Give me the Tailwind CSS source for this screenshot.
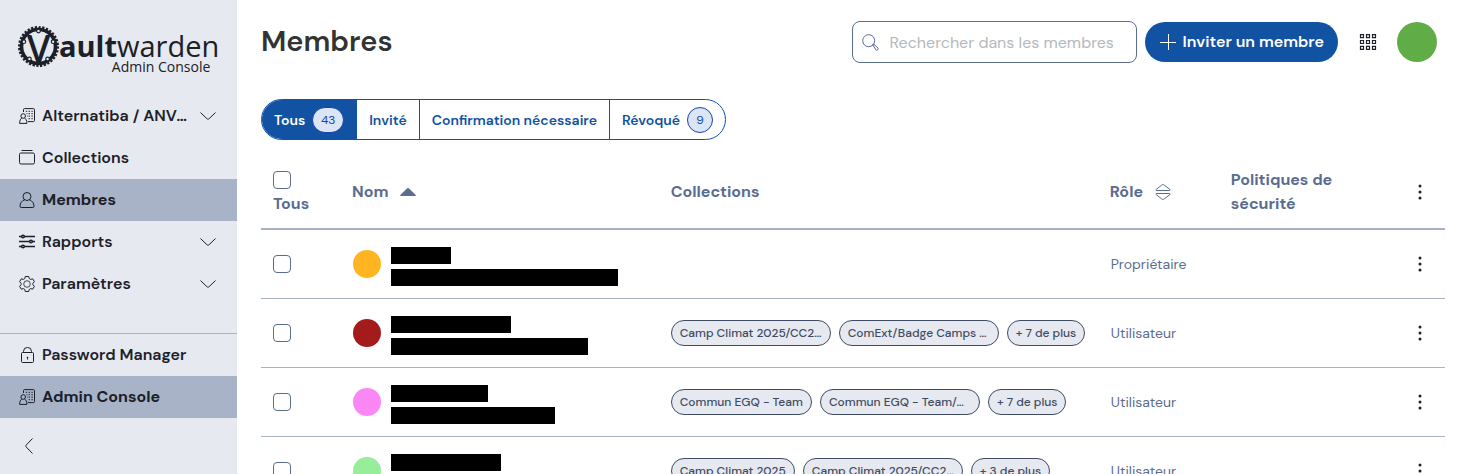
<!DOCTYPE html>
<html lang="fr">
<head>
  <meta charset="UTF-8" />
  <meta name="viewport" content="width=device-width, initial-scale=1.0" />
  <title>Membres | Vaultwarden</title>
  <script src="https://cdn.jsdelivr.net/npm/@tailwindcss/browser@4"></script>
</head>
<body class="bg-white text-[#1b2029] font-['DM_Sans',Inter,sans-serif]">

  <!-- Shared icons -->
  <svg class="hidden">
    <symbol id="i-business" viewBox="0 0 16 16">
      <path d="M4.500 4V1.600c0-.6.4-1 1-1h9c.6 0 1 .4 1 1v11c0 .6-.4 1-1 1H8.800" />
      <path d="M6.800 3.300h1.400M9.600 3.300H11M12.400 3.300h1.400M7.500 5.700h.9M9.600 5.700H11M12.400 5.700h1.400M8 8.100h.6M9.600 8.100H11M12.400 8.100h1.400M9.600 10.700H11M12.400 10.700h1.400" />
      <circle cx="4.200" cy="8" r="2.300" />
      <path d="M2.900 10C1.500 10.700.6 12.500.6 15.400h7.300C7.900 12.500 7 10.700 5.500 10" />
    </symbol>
    <symbol id="i-chevron" viewBox="0 0 16 16"><path d="M.5 4.500 6.900 10.700c.6.6 1.600.6 2.200 0L15.500 4.500" /></symbol>
  </svg>

  <div class="flex h-screen overflow-hidden">
    <!-- Sidebar -->
    <nav class="flex w-[237px] shrink-0 flex-col bg-[#e6e9ef] text-base font-semibold">
      <a href="#" class="flex h-[95px] px-[18px] pt-8 font-['Open_Sans',sans-serif]">
        <svg class="-mt-1.5 h-[41px] w-[41px] shrink-0 overflow-visible" viewBox="0 0 41 41" fill="none" stroke="#1b2029">
          <circle cx="20.500" cy="20.500" r="17" stroke-width="3.600" />
          <circle cx="20.500" cy="20.500" r="19.300" stroke-width="2.400" pathLength="96" stroke-dasharray="1.800 1.200" />
          <g fill="#e6e9ef" stroke-width="1.200">
            <circle cx="20.500" cy="5" r="1.800" />
            <circle cx="5.900" cy="15.700" r="1.800" />
            <circle cx="35.100" cy="15.700" r="1.800" />
            <circle cx="11.400" cy="33" r="1.800" />
            <circle cx="29.600" cy="33" r="1.800" />
          </g>
          <text x="20.500" y="36" text-anchor="middle" font-size="38" font-weight="600" fill="#1b2029" stroke="none">V</text>
        </svg>
        <span class="flex flex-col items-end">
          <span class="text-[29px] leading-7 font-normal"><b class="font-bold">ault</b>warden</span>
          <span class="pr-[9px] text-sm leading-[14px] font-normal">Admin Console</span>
        </span>
      </a>

      <button class="flex h-[42px] items-center gap-[7px] pr-[21px] pl-[19px] text-left">
        <svg class="size-4 shrink-0" fill="none" stroke="currentColor"><use href="#i-business" /></svg>
        <span class="w-[148px] truncate">Alternatiba / ANV-COP21</span>
        <svg class="ml-auto size-4 shrink-0" fill="none" stroke="currentColor"><use href="#i-chevron" /></svg>
      </button>
      <a href="#" class="flex h-[42px] items-center gap-[7px] pl-[19px]">
        <svg class="size-4" viewBox="0 0 16 16" fill="none" stroke="currentColor">
          <path d="M2.500.5h11" /><rect x=".5" y="3" width="15" height="11" rx="1.500" />
        </svg>
        Collections
      </a>
      <a href="#" class="flex h-[42px] items-center gap-[7px] bg-[#a8b3c8] pl-[19px] font-bold">
        <svg class="size-4" viewBox="0 0 16 16" fill="none" stroke="currentColor">
          <circle cx="8" cy="4.500" r="4" /><path d="M5.500 7.800C2.800 8.800 1 11.200 1 14.300c0 .8.4 1.200 1.200 1.200h11.600c.8 0 1.200-.4 1.200-1.200 0-3.100-1.800-5.500-4.500-6.500" />
        </svg>
        Membres
      </a>
      <button class="flex h-[42px] items-center gap-[7px] pr-[21px] pl-[19px]">
        <svg class="size-4" viewBox="0 0 16 16" fill="none" stroke="currentColor" stroke-width="1.600">
          <path d="M0 2.500h2.500M5.500 2.500H16M0 7.500h10.500M13.500 7.500H16M0 12.500h2.500M5.500 12.500H16" />
          <circle cx="4" cy="2.500" r="1.300" /><circle cx="12" cy="7.500" r="1.300" /><circle cx="4" cy="12.500" r="1.300" />
        </svg>
        Rapports
        <svg class="ml-auto size-4" fill="none" stroke="currentColor"><use href="#i-chevron" /></svg>
      </button>
      <button class="flex h-[42px] items-center gap-[7px] pr-[21px] pl-[19px]">
        <svg class="size-4" viewBox="0 0 16 16" fill="none" stroke="currentColor" stroke-linejoin="round">
          <path d="M6.300.5h3.400l.6 2.100 1.300.8 2.100-.6 1.700 2.900L13.900 7.300v1.400l1.500 1.600-1.700 2.900-2.100-.6-1.300.8-.6 2.100H6.300l-.6-2.100-1.300-.8-2.100.6L.6 10.300l1.500-1.600V7.300L.6 5.700l1.700-2.900 2.100.6 1.300-.8z" />
          <circle cx="8" cy="8" r="3.300" stroke-width=".8" />
        </svg>
        Paramètres
        <svg class="ml-auto size-4" fill="none" stroke="currentColor"><use href="#i-chevron" /></svg>
      </button>

      <div class="mt-auto border-t border-[#a8b3c8]">
        <a href="#" class="flex h-[42px] items-center gap-[7px] pl-[19px]">
          <svg class="size-4" viewBox="0 0 16 16" fill="none" stroke="currentColor">
            <rect x="2.500" y="5.500" width="12" height="10" rx="1" /><path d="M4.500 5.500V4.400a4 4 0 0 1 8 0v1.100M8.500 10v2.500" /><circle cx="8.500" cy="10.500" r=".4" />
          </svg>
          Password Manager
        </a>
        <a href="#" class="flex h-[42px] items-center gap-[7px] bg-[#a8b3c8] pl-[19px] font-bold">
          <svg class="size-4" fill="none" stroke="currentColor"><use href="#i-business" /></svg>
          Admin Console
        </a>
        <button class="flex h-14 w-full items-center pl-[21px]" aria-label="Réduire le menu">
          <svg class="size-4 rotate-90" fill="none" stroke="currentColor"><use href="#i-chevron" /></svg>
        </button>
      </div>
    </nav>

    <main class="min-w-0 flex-1 pt-[21px] pr-[21px] pl-6">
      <!-- Header -->
      <header class="flex items-start pr-2">
        <h1 class="text-[29px] leading-10 font-semibold text-[#333]">Membres</h1>
        <div class="ml-auto flex items-center">
          <label class="flex h-[42px] w-[285px] items-center gap-[11px] rounded-lg border border-[#5a6d91] pr-2 pl-[9px] text-[#5a6d91]">
            <svg class="size-[17px] shrink-0" viewBox="0 0 17 17" fill="none" stroke="currentColor">
              <circle cx="6.700" cy="6.700" r="6" /><path d="m10.900 11.100.9-.9 4.200 3.900c1 .9-.9 3-1.900 2z" /><path d="m10.400 10.400 1 1" />
            </svg>
            <input type="search" aria-label="Rechercher dans les membres" placeholder="Rechercher dans les membres" class="w-full min-w-0 flex-1 pt-0.5 text-base outline-none placeholder:text-[#b5b8bd]">
          </label>
          <button class="ml-2 flex h-10 items-center gap-[7px] rounded-full bg-[#1252a3] pr-[14px] pl-[15px] text-base font-semibold whitespace-nowrap text-white">
            <svg class="size-4" viewBox="0 0 16 16" fill="none" stroke="currentColor"><path d="M8.500 0v16M0 8.500h16" /></svg>
            Inviter un membre
          </button>
          <button class="ml-[21px]" aria-label="Changer de produit">
            <svg class="h-4 w-[18px]" viewBox="0 0 18 16" fill="none" stroke="#1b2029" stroke-width="1.200">
              <path d="M1.500.6h3v3h-3zM7.500.6h3v3h-3zM13.500.6h3v3h-3zM1.500 6.500h3v3h-3zM7.500 6.500h3v3h-3zM13.500 6.500h3v3h-3zM1.500 12.400h3v3h-3zM7.500 12.400h3v3h-3zM13.500 12.400h3v3h-3z" />
            </svg>
          </button>
          <button class="ml-5 size-10 rounded-full bg-[#60ad47]" aria-label="Mon compte"></button>
        </div>
      </header>

      <!-- Status filter -->
      <div role="radiogroup" aria-label="Filtrer par statut" class="mt-9 inline-flex h-[41px] overflow-hidden rounded-full border border-[#1252a3] text-sm font-semibold text-[#1252a3]">
        <label class="relative flex items-center gap-[7px] bg-[#1252a3] px-3 text-white">
          <input type="radio" name="status" class="sr-only" checked>
          Tous
          <span class="flex h-[26px] w-8 items-center justify-center rounded-full border border-[#1a41ac] bg-[#dbe5f6] text-xs font-normal text-[#1a41ac]">43</span>
        </label>
        <label class="relative flex items-center border-l border-[#1252a3] px-3"><input type="radio" name="status" class="sr-only">Invité</label>
        <label class="relative flex items-center border-l border-[#1252a3] px-3"><input type="radio" name="status" class="sr-only">Confirmation nécessaire</label>
        <label class="relative flex items-center gap-[7px] border-l border-[#1252a3] px-3">
          <input type="radio" name="status" class="sr-only">
          Révoqué
          <span class="flex size-[26px] items-center justify-center rounded-full border border-[#1a41ac] bg-[#dbe5f6] text-xs font-normal">9</span>
        </label>
      </div>

      <!-- Members table -->
      <table class="mt-4 w-full table-fixed border-separate border-spacing-0 text-left">
        <colgroup>
          <col class="w-[79px]"><col class="w-[27%]"><col class="w-[37%]"><col class="w-[121px]"><col><col class="w-[50px]">
        </colgroup>
        <thead class="text-base text-[#5a6d91]">
          <tr>
            <th class="border-b-2 border-[#a8b3c8] p-3 font-bold">
              <label class="block">
                <span class="flex h-6 items-center"><input type="checkbox" class="size-[18px] appearance-none rounded border border-[#5a6d91] bg-white"></span>
                Tous
              </label>
            </th>
            <th class="border-b-2 border-[#a8b3c8] p-3 font-bold">
              <button class="flex items-center gap-3">
                Nom
                <svg class="h-2 w-4" viewBox="0 0 16 8" fill="currentColor"><path d="M.6 8C-.1 8-.1 7.300.4 6.900L6.900.6c.7-.7 1.500-.7 2.200 0l6.500 6.300c.5.4.5 1.100-.2 1.100z" /></svg>
              </button>
            </th>
            <th class="border-b-2 border-[#a8b3c8] p-3 pl-[11px] font-bold">Collections</th>
            <th class="border-b-2 border-[#a8b3c8] p-3 font-bold">
              <button class="flex items-center gap-3">
                Rôle
                <svg class="size-4" viewBox="0 0 16 16" fill="none" stroke="currentColor">
                  <path d="M1.500 6.500c-.7 0-.8-.6-.4-1L6.800 1c.8-.6 1.600-.6 2.400 0l5.700 4.500c.4.4.3 1-.4 1zM1.500 9.500c-.7 0-.8.6-.4 1L6.800 15c.8.6 1.600.6 2.400 0l5.700-4.500c.4-.4.3-1-.4-1z" />
                </svg>
              </button>
            </th>
            <th class="border-b-2 border-[#a8b3c8] p-3 font-bold">Politiques de sécurité</th>
            <th class="border-b-2 border-[#a8b3c8]">
              <button class="flex w-full justify-center text-[#1b2029]" aria-label="Options">
                <svg class="h-4 w-1" viewBox="0 0 4 16" fill="currentColor"><circle cx="2" cy="2" r="1.500" /><circle cx="2" cy="8" r="1.500" /><circle cx="2" cy="14" r="1.500" /></svg>
              </button>
            </th>
          </tr>
        </thead>
        <tbody id="members"></tbody>
      </table>
    </main>
  </div>

  <script>
    // name / email hold the width of the masked text
    const members = [
      { color: "bg-[#ffb522]", name: 60, email: 227, collections: [], more: 0, role: "Propriétaire" },
      { color: "bg-[#a31b1b]", name: 120, email: 197, collections: ["Camp Climat 2025/CC25 Orga", "ComExt/Badge Camps Climat"], more: 7, role: "Utilisateur" },
      { color: "bg-[#fb87f4]", name: 97, email: 164, collections: ["Commun EGQ - Team", "Commun EGQ - Team/Outils"], more: 7, role: "Utilisateur" },
      { color: "bg-[#98ee98]", name: 110, email: 180, collections: ["Camp Climat 2025", "Camp Climat 2025/CC25 Orga"], more: 3, role: "Utilisateur" }
    ];

    const badge = text => `<span class="block h-[26px] max-w-[160px] shrink-0 truncate rounded-full border border-[#3f4b63] bg-[#e6e9ef] px-2 text-xs leading-6 font-medium text-[#3f4b63]">${text}</span>`;

    document.getElementById("members").innerHTML = members.map((m, i) => `
      <tr class="h-[69px]">
        <td class="border-b border-[#a8b3c8] px-3">
          <input type="checkbox" aria-label="Membre ${i + 1}" class="block size-[18px] appearance-none rounded border border-[#5a6d91] bg-white">
        </td>
        <td class="border-b border-[#a8b3c8] px-[13px]">
          <div class="flex items-center gap-[10px]">
            <span class="size-7 shrink-0 rounded-full ${m.color}"></span>
            <div class="space-y-[5px] pt-1">
              <div class="h-[17px] bg-black" style="width: ${m.name}px"></div>
              <div class="h-[17px] bg-black" style="width: ${m.email}px"></div>
            </div>
          </div>
        </td>
        <td class="border-b border-[#a8b3c8] pl-[11px]">
          <div class="flex gap-2">
            ${m.collections.map(badge).join("")}
            ${m.more ? badge(`+ ${m.more} de plus`) : ""}
          </div>
        </td>
        <td class="border-b border-[#a8b3c8] px-[13px] text-sm text-[#5a6d91]">${m.role}</td>
        <td class="border-b border-[#a8b3c8]"></td>
        <td class="border-b border-[#a8b3c8]">
          <button class="flex w-full justify-center" aria-label="Options">
            <svg class="h-4 w-1" viewBox="0 0 4 16" fill="currentColor"><circle cx="2" cy="2" r="1.500" /><circle cx="2" cy="8" r="1.500" /><circle cx="2" cy="14" r="1.500" /></svg>
          </button>
        </td>
      </tr>
    `).join("");
  </script>
</body>
</html>
